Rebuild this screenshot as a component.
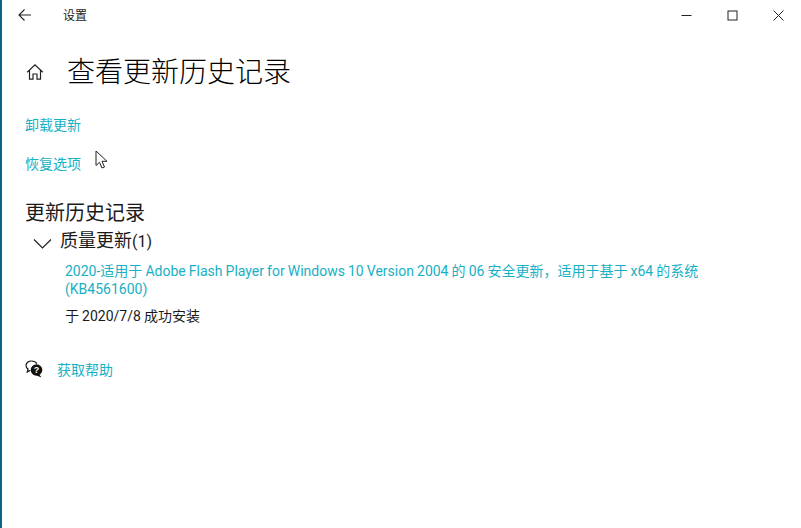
<div class="window">
	<header class="titlebar">
		<div class="title-left">
			<svg class="back" width="14" height="14" viewBox="0 0 14 14"><path d="M6.500 1.500 1 7l5.500 5.500M1 7H13" fill="none" stroke="#222" stroke-width="1.100"/></svg>
			<span class="app-name">设置</span>
		</div>
		<div class="controls">
			<svg width="11" height="11" viewBox="0 0 11 11"><path d="M0.500 5.500H10.500" stroke="#222" stroke-width="1"/></svg>
			<svg width="11" height="11" viewBox="0 0 11 11"><rect x="1" y="1" width="9" height="9" fill="none" stroke="#222" stroke-width="1"/></svg>
			<svg width="11" height="11" viewBox="0 0 11 11"><path d="M0.500 0.500 10.500 10.500M10.500 0.500 0.500 10.500" stroke="#222" stroke-width="1"/></svg>
		</div>
	</header>

	<main class="content">
		<div class="page-head">
			<svg class="home" width="18" height="18" viewBox="0 0 18 18"><path d="M1.200 9.200 9 1.800l7.800 7.400M3.500 7.400V16.200H7V11h4v5.200h3.500V7.400" fill="none" stroke="#222" stroke-width="1.200"/></svg>
			<h1>查看更新历史记录</h1>
		</div>

		<a class="link first">卸载更新</a>
		<a class="link second">恢复选项</a>

		<h2>更新历史记录</h2>
		<div class="group">
			<svg class="chevron" width="19" height="11" viewBox="0 0 19 11"><path d="M1 1.500 9.500 10 18 1.500" fill="none" stroke="#222" stroke-width="1.200"/></svg>
			<span>质量更新<span class="count">(1)</span></span>
		</div>
		<div class="update">
			<a class="link">2020-适用于 Adobe Flash Player for Windows 10 Version 2004 的 06 安全更新，适用于基于 x64 的系统 (KB4561600)</a>
			<p>于 2020/7/8 成功安装</p>
		</div>

		<div class="help">
			<svg width="18" height="18" viewBox="0 0 18 18">
				<path d="M6.500 1C3.400 1 1 3 1 5.600c0 1.500.8 2.700 2 3.500L2.300 12 5.300 10.200" fill="none" stroke="#111" stroke-width="1.200"/>
				<path d="M6.500 1c2.300 0 4.300 1 5.300 2.600" fill="none" stroke="#111" stroke-width="1.200"/>
				<circle cx="11.500" cy="10" r="5.800" fill="#111"/>
				<path d="M14 14 16.500 17.500 11.500 15.500Z" fill="#111"/>
				<text x="11.500" y="13.300" text-anchor="middle" class="q">?</text>
			</svg>
			<a class="link">获取帮助</a>
		</div>
	</main>

	<svg class="cursor" width="14" height="20" viewBox="0 0 14 20"><path d="M1 1V15.500L4.500 12.300 7 18 9.500 17 7 11.300H12Z" fill="#fff" stroke="#222" stroke-width="1"/></svg>
</div>

<style>
	:global(body) { margin: 0; background: #fff; }
	.window {
		position: relative;
		width: 801px;
		height: 528px;
		box-sizing: border-box;
		border-left: 2px solid #0a6488;
		background: #fff;
		overflow: hidden;
		font-family: Roboto, "Noto Sans CJK SC", sans-serif;
		color: #1a1a1a;
	}
	.titlebar { display: flex; justify-content: space-between; height: 32px; }
	.title-left { display: flex; align-items: center; padding-left: 16px; height: 30px; }
	.app-name { margin: 0 0 2px 31px; font-size: 12px; }
	.controls { display: flex; align-items: center; gap: 35px; padding-right: 17px; height: 30px; }
	.content { display: flex; flex-direction: column; align-items: flex-start; padding-left: 23px; }
	.page-head { display: flex; align-items: center; height: 40px; margin-top: 21px; }
	.home { margin: 0 0 3px 1px; }
	h1 { margin: 0 0 0 23px; font-size: 28px; font-weight: 300; line-height: 40px; color: #000; }
	.link { color: #17b0c4; font-size: 14px; }
	.first { margin-top: 22px; line-height: 20px; }
	.second { margin-top: 19px; line-height: 20px; }
	h2 { margin: 26px 0 0; font-size: 20px; font-weight: 400; line-height: 26px; }
	.group { display: flex; align-items: center; margin: 3px 0 0 8px; font-size: 18px; line-height: 24px; }
	.count { font-size: 16px; }
	.chevron { margin-right: 8px; margin-top: 4px; }
	.update { margin: 8px 0 0 40px; width: 660px; font-size: 14px; line-height: 18px; word-spacing: -0.4px; }
	.update .link { display: block; }
	.update p { margin: 9px 0 0; }
	.help { display: flex; align-items: center; gap: 14px; margin-top: 34px; }
	.q { font-size: 9px; font-weight: 700; fill: #fff; font-family: "Liberation Sans", sans-serif; }
	.cursor { position: absolute; left: 93px; top: 150px; }
</style>
